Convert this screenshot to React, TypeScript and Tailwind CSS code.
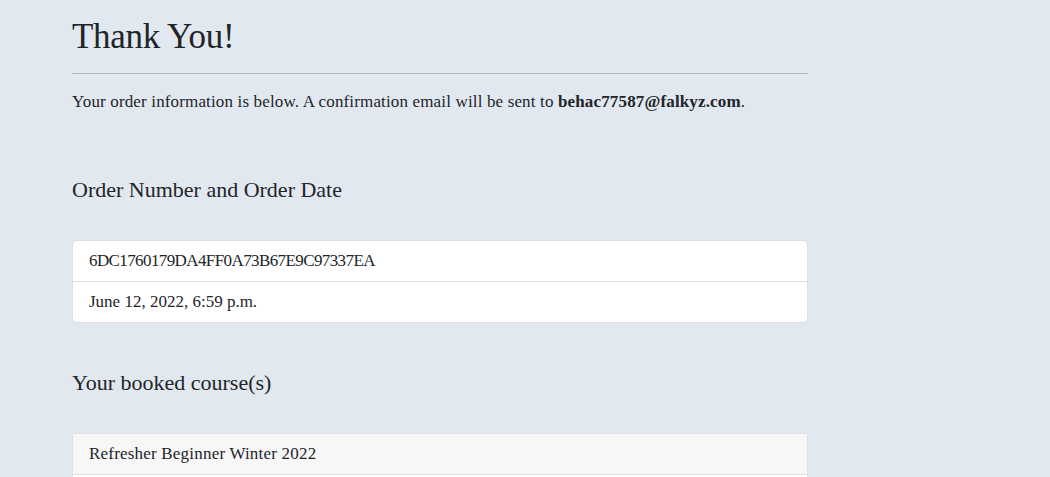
export default function App() {
  return (
    <div className="min-h-screen bg-[#e2e8f0] text-[#212529]" style={{ fontFamily: '"Liberation Serif", serif' }}>
      <div className="ml-[72px] w-[736px] pt-[14px]">
        <h1 className="text-[35px] leading-[46px] tracking-[-0.3px]">Thank You!</h1>
        <hr className="mt-[13px] border-t border-[#b4b8bf]" />
        <p className="mt-[16px] text-[17px] leading-[24px] tracking-[0.15px]">
          Your order information is below. A confirmation email will be sent to{' '}
          <strong className="font-bold">behac77587@falkyz.com</strong>.
        </p>

        <h2 className="mt-[62px] text-[22px] leading-[28px]">Order Number and Order Date</h2>
        <ul className="mt-[36px] rounded-[4px] border border-[#dcdfe3] bg-white text-[17px] leading-[22px]">
          <li className="px-4 py-[9px] tracking-[-0.6px]">6DC1760179DA4FF0A73B67E9C97337EA</li>
          <li className="border-t border-[#dcdfe3] px-4 py-[9px]">June 12, 2022, 6:59 p.m.</li>
        </ul>

        <h2 className="mt-[46px] text-[22px] leading-[28px]">Your booked course(s)</h2>
        <ul className="mt-[36px] rounded-[4px] border border-[#dcdfe3] bg-white text-[17px] leading-[22px]">
          <li className="bg-[#f7f7f7] px-4 py-[9px] tracking-[0.2px]">Refresher Beginner Winter 2022</li>
          <li className="border-t border-[#dcdfe3] px-4 py-[9px]">&nbsp;</li>
        </ul>
      </div>
    </div>
  );
}
